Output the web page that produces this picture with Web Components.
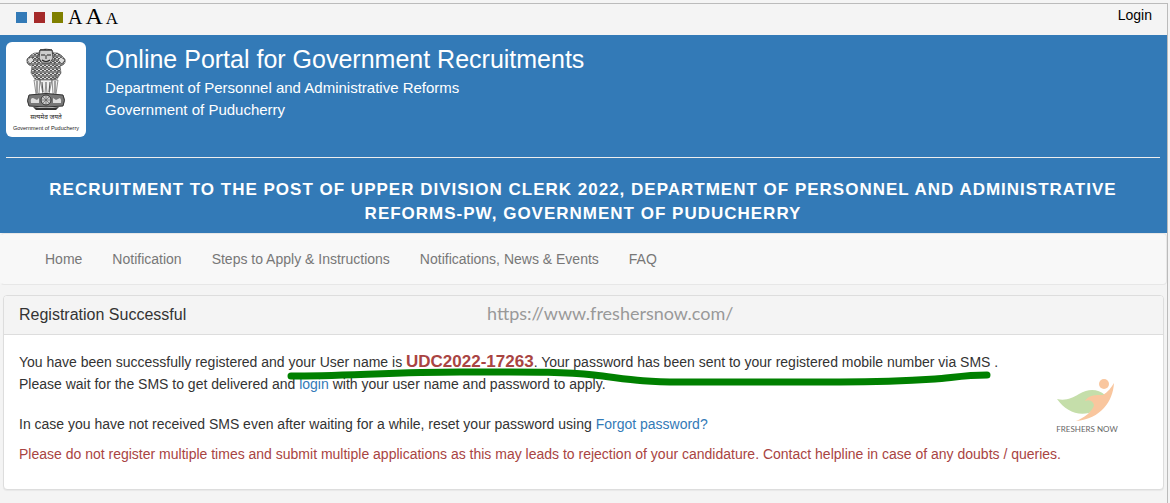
<!DOCTYPE html>
<html lang="en">
<head>
<meta charset="utf-8">
<meta name="viewport" content="width=device-width, initial-scale=1">
<title>Online Portal for Government Recruitments</title>
<style>
    body {
        margin: 0;
        padding-top: 3px;
        background: #f4f4f4;
        color: #333;
        font: 14px/20px "Liberation Sans", Arial, sans-serif;
    }
</style>
</head>
<body>
<portal-page>
    <portal-toolbar></portal-toolbar>
    <portal-header>
        <span slot="title">Online Portal for Government Recruitments</span>
        <span slot="department">Department of Personnel and Administrative Reforms</span>
        <span slot="government">Government of Puducherry</span>
        <span slot="post">RECRUITMENT TO THE POST OF UPPER DIVISION CLERK 2022, DEPARTMENT OF PERSONNEL AND ADMINISTRATIVE REFORMS-PW, GOVERNMENT OF PUDUCHERRY</span>
    </portal-header>
    <portal-nav></portal-nav>
    <message-panel>
        <span slot="heading">Registration Successful</span>
        <registration-message user="UDC2022-17263"></registration-message>
    </message-panel>
</portal-page>

<script>
class PortalPage extends HTMLElement {
    constructor() {
        super();
        this.attachShadow({ mode: 'open' });
    }

    connectedCallback() {
        this.shadowRoot.innerHTML = `
        <style>
            :host {
                display: flex;
                flex-direction: column;
                box-sizing: border-box;
                min-height: calc(100vh - 3px);
                margin-right: 2px;
                border-top: 1px solid #bbb;
                border-right: 1px solid #bbb;
            }
        </style>
        <slot></slot>
        `;
    }
}

class PortalToolbar extends HTMLElement {
    constructor() {
        super();
        this.attachShadow({ mode: 'open' });
    }

    connectedCallback() {
        this.shadowRoot.innerHTML = `
        <style>
            :host {
                display: flex;
                justify-content: space-between;
                align-items: flex-start;
                height: 31px;
                padding: 0 15px 0 16px;
            }
            .tools {
                display: flex;
                gap: 5px;
            }
            .swatches {
                display: flex;
                gap: 7px;
                padding-top: 8px;
            }
            .letters {
                display: flex;
                align-items: baseline;
                gap: 3px;
            }
            button {
                border: 0;
                padding: 0;
                background: none;
                color: #000;
                cursor: pointer;
                font-family: "Liberation Serif", serif;
                line-height: 25px;
            }
            .swatch {
                width: 11px;
                height: 11px;
            }
            .blue { background: #337ab7; }
            .red { background: #a52a2a; }
            .olive { background: #808000; }
            .normal { font-size: 20px; }
            .large { font-size: 24px; }
            .small { font-size: 17px; }
            a {
                color: #000;
                text-decoration: none;
                line-height: 23px;
            }
        </style>
        <div class="tools">
            <div class="swatches">
                <button class="swatch blue" aria-label="Blue theme"></button>
                <button class="swatch red" aria-label="Red theme"></button>
                <button class="swatch olive" aria-label="Olive theme"></button>
            </div>
            <div class="letters">
                <button class="normal">A</button>
                <button class="large">A</button>
                <button class="small">A</button>
            </div>
        </div>
        <a href="#login">Login</a>
        `;
    }
}

class StateEmblem extends HTMLElement {
    constructor() {
        super();
        this.attachShadow({ mode: 'open' });
    }

    connectedCallback() {
        this.shadowRoot.innerHTML = `
        <style>
            :host {
                display: block;
                width: 80px;
                height: 95px;
                border-radius: 6px;
                background: #fff;
            }
            svg { display: block; }
        </style>
        <svg width="80" height="95" viewBox="0 0 160 190" role="img" aria-label="State emblem">
            <defs>
                <pattern id="mane" width="4" height="4" patternUnits="userSpaceOnUse">
                    <rect width="4" height="4" fill="#888"/>
                    <path d="M0 1q1 2 2 0t2 0M0 3q1 2 2 0t2 0" fill="none" stroke="#eee" stroke-width=".8"/>
                    <path d="M1 0v2M3 2v2" stroke="#111" stroke-width=".9"/>
                </pattern>
            </defs>
            <g transform="scale(2)">
                <!-- side lions -->
                <path d="M34 11q-6-1-9 2l-4 4q-1 4 2 6l3 1-1 7 4 6 7 2zM46 11q6-1 9 2l4 4q1 4-2 6l-3 1 1 7-4 6-7 2z" fill="url(#mane)" stroke="#444" stroke-width=".6"/>
                <path d="M21 18l4-3 3 3-4 4zM59 18l-4-3-3 3 4 4z" fill="#ddd" stroke="#333" stroke-width=".6"/>
                <!-- front lion -->
                <path d="M34 8q6-2 12 0l3 7-1 6 4 8-3 7-9 4-9-4-3-7 4-8-1-6z" fill="url(#mane)" stroke="#444" stroke-width=".6"/>
                <path d="M34 8h12l1 8-3 5h-8l-3-5z" fill="#ccc" stroke="#222" stroke-width=".7"/>
                <path d="M35 13h4M41 13h4M36 18q4 3 8 0" fill="none" stroke="#222" stroke-width="1.2"/>
                <path d="M40 13v4M34 8h12" fill="none" stroke="#333"/>
                <!-- legs -->
                <path d="M28 38l2 14h3l1-14 3 14h2l1-12 1 12h2l3-14 1 14h3l2-14z" fill="#eee" stroke="#666" stroke-width=".7"/>
                <path d="M31 39v12M36 40l1 10M44 40l-1 10M49 39v12" stroke="#444" stroke-width=".9"/>
                <!-- abacus with wheel -->
                <path d="M23 53q17-3 34 0 3 5 0 11-17 2-34 0-3-5 0-11z" fill="#777" stroke="#333"/>
                <path d="M25 61q-1-5 2-5l4 2 2-2v5zM47 61v-5l3 2 4-2q2 2 1 5z" fill="#ddd"/>
                <circle cx="40" cy="58" r="5" fill="#ccc" stroke="#333"/>
                <path d="M40 53v10M35 58h10M37 55l6 6M43 55l-6 6" stroke="#555" stroke-width=".6"/>
                <path d="M27 65q13 2 26 0l-3 3H30z" fill="#333"/>
            </g>
            <text x="80" y="153" text-anchor="middle" font-size="13" font-family="'Noto Sans Devanagari', 'Noto Sans', sans-serif" fill="#222">सत्यमेव जयते</text>
            <text x="80" y="176" text-anchor="middle" font-size="11" font-family="'Liberation Sans', sans-serif" fill="#222">Government of Puducherry</text>
        </svg>
        `;
    }
}

class PortalHeader extends HTMLElement {
    constructor() {
        super();
        this.attachShadow({ mode: 'open' });
    }

    connectedCallback() {
        this.shadowRoot.innerHTML = `
        <style>
            :host {
                display: block;
                padding: 7px 7px 7px 6px;
                background: #337ab7;
                color: #fff;
            }
            .brand {
                display: flex;
                gap: 19px;
                padding-bottom: 20px;
                border-bottom: 1px solid #eee;
            }
            h1 {
                margin: 0;
                font-size: 25px;
                font-weight: 400;
                line-height: 35px;
            }
            p {
                margin: 0;
                font-size: 15px;
                line-height: 22px;
            }
            h2 {
                margin: 0;
                padding: 20px 40px 0;
                font-size: 17px;
                line-height: 24px;
                letter-spacing: 1px;
                text-align: center;
            }
        </style>
        <div class="brand">
            <state-emblem></state-emblem>
            <div>
                <h1><slot name="title"></slot></h1>
                <p><slot name="department"></slot></p>
                <p><slot name="government"></slot></p>
            </div>
        </div>
        <h2><slot name="post"></slot></h2>
        `;
    }
}

class PortalNav extends HTMLElement {
    constructor() {
        super();
        this.attachShadow({ mode: 'open' });
    }

    connectedCallback() {
        this.shadowRoot.innerHTML = `
        <style>
            :host {
                display: block;
                border: 1px solid #e7e7e7;
                border-left-color: #f8f8f8;
                border-radius: 4px;
                background: #f8f8f8;
            }
            nav {
                display: flex;
                gap: 30px;
                padding: 15px 44px;
            }
            a {
                color: #777;
                text-decoration: none;
            }
        </style>
        <nav>
            <a href="#home">Home</a>
            <a href="#notification">Notification</a>
            <a href="#steps">Steps to Apply &amp; Instructions</a>
            <a href="#news">Notifications, News &amp; Events</a>
            <a href="#faq">FAQ</a>
        </nav>
        `;
    }
}

class MessagePanel extends HTMLElement {
    constructor() {
        super();
        this.attachShadow({ mode: 'open' });
    }

    connectedCallback() {
        this.shadowRoot.innerHTML = `
        <style>
            :host {
                display: block;
                position: relative;
                margin: 10px 3px 13px;
                border: 1px solid #ddd;
                border-radius: 4px;
                background: #fff;
                box-shadow: 0 1px 1px rgba(0, 0, 0, 0.05);
            }
            header {
                padding: 9px 15px;
                border-bottom: 1px solid #ddd;
                border-radius: 3px 3px 0 0;
                background: #f4f4f4;
            }
            h3 {
                margin: 0;
                font-size: 16px;
                font-weight: 400;
                line-height: 20px;
            }
            .body { padding: 16px 15px 15px; }
            .site {
                position: absolute;
                top: 6px;
                left: 483px;
                color: #999;
                font: 18px/22px Lato, sans-serif;
            }
            .underline {
                position: absolute;
                top: 64px;
                left: 276px;
                pointer-events: none;
            }
            .logo {
                position: absolute;
                top: 81px;
                right: 38px;
            }
        </style>
        <header><h3><slot name="heading"></slot></h3></header>
        <div class="body"><slot></slot></div>
        <span class="site">https://www.freshersnow.com/</span>
        <svg class="underline" width="720" height="32" viewBox="280 360 720 32" aria-hidden="true">
            <path d="M291 376C340 376 400 372 460 372S560 371 594 375S640 382 680 382H840C880 382 920 380 935 379S965 375 987 375" fill="none" stroke="#008000" stroke-width="7" stroke-linecap="round"/>
        </svg>
        <svg class="logo" width="76" height="60" viewBox="-5 0 76 60" role="img" aria-label="Freshers Now">
            <path d="M3 22C12 24 18 21 25 17C35 11 44 12 51 18C44 24 43 32 35 36C22 39 11 33 3 22Z" fill="#c5deaa"/>
            <path d="M60 6C59 24 47 42 22 44C30 41 39 34 40 28C39 24 35 22 31 24C35 17 44 18 49 18C54 15 57 11 60 6Z" fill="#f9c69e"/>
            <circle cx="50" cy="7" r="5" fill="#f9c69e"/>
            <text x="33" y="55" text-anchor="middle" font-family="Lato, sans-serif" font-size="8" fill="#666">FRESHERS NOW</text>
        </svg>
        `;
    }
}

class RegistrationMessage extends HTMLElement {
    constructor() {
        super();
        this.attachShadow({ mode: 'open' });
    }

    connectedCallback() {
        this.shadowRoot.innerHTML = `
        <style>
            :host { display: block; }
            p { margin: 0 0 10px; }
            .result {
                margin-bottom: 19px;
                line-height: 22px;
            }
            strong {
                color: #a94442;
                font-size: 17px;
            }
            a {
                color: #337ab7;
                text-decoration: none;
            }
            .warning { color: #a94442; }
        </style>
        <p class="result">You have been successfully registered and your User name is <strong></strong>. Your password has been sent to your registered mobile number via SMS .<br>
        Please wait for the SMS to get delivered and <a href="#login">login</a> with your user name and password to apply.</p>
        <p>In case you have not received SMS even after waiting for a while, reset your password using <a href="#forgot">Forgot password?</a></p>
        <p class="warning">Please do not register multiple times and submit multiple applications as this may leads to rejection of your candidature. Contact helpline in case of any doubts / queries.</p>
        `;
        this.shadowRoot.querySelector('strong').textContent = this.getAttribute('user');
    }
}

customElements.define('state-emblem', StateEmblem);
customElements.define('portal-toolbar', PortalToolbar);
customElements.define('portal-header', PortalHeader);
customElements.define('portal-nav', PortalNav);
customElements.define('registration-message', RegistrationMessage);
customElements.define('message-panel', MessagePanel);
customElements.define('portal-page', PortalPage);
</script>
</body>
</html>
